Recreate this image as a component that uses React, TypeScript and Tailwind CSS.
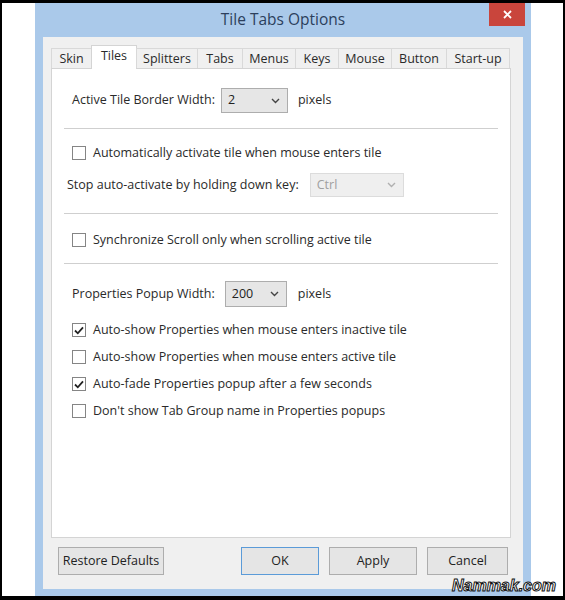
import { ReactNode } from "react";

const tabs = ["Skin", "Tiles", "Splitters", "Tabs", "Menus", "Keys", "Mouse", "Button", "Start-up"];
const tabWidths = [41, 45, 62, 46, 54, 44, 54, 56, 64];

const Chevron = ({ color = "#555" }: { color?: string }) => (
  <svg width="9" height="6" viewBox="0 0 9 6">
    <path d="M1 1 L4.5 4.5 L8 1" stroke={color} strokeWidth="1.4" fill="none" />
  </svg>
);

const Select = ({ value, width, disabled }: { value: string; width: string; disabled?: boolean }) => (
  <div
    className={`${width} h-full flex items-center justify-between pl-[6px] pr-[7px] border ${
      disabled ? "bg-[#efefef] border-[#dcdcdc] text-[#a0a0a0]" : "bg-[#e6e6e6] border-[#adadad] text-[#222]"
    }`}
  >
    <span>{value}</span>
    <Chevron color={disabled ? "#b0b0b0" : "#444"} />
  </div>
);

const Checkbox = ({ checked, children }: { checked?: boolean; children: ReactNode }) => (
  <div className="h-[16px] flex items-center pl-[20px]">
    <div className="w-[14px] h-[14px] bg-white border border-[#858585] flex items-center justify-center">
      {checked && (
        <svg width="10" height="9" viewBox="0 0 10 9">
          <path d="M1 4.5 L3.8 7.3 L9 1.3" stroke="#222" strokeWidth="1.8" fill="none" />
        </svg>
      )}
    </div>
    <span className="ml-[7px]">{children}</span>
  </div>
);

const Separator = ({ mt }: { mt: string }) => <div className={`${mt} mx-[12px] border-t border-[#cfcfcf]`} />;

const Button = ({ label, width, primary }: { label: string; width: string; primary?: boolean }) => (
  <div
    className={`${width} h-[28px] flex items-center justify-center bg-[#e5e5e5] border text-[12.5px] text-[#222] ${
      primary ? "border-[#5b9bd8]" : "border-[#adadad]"
    }`}
  >
    {label}
  </div>
);

export default function App() {
  return (
    <div
      className="w-[565px] h-[600px] bg-black pt-[3px] pb-[4px] px-[2px] relative"
      style={{ fontFamily: '"Open Sans", "Noto Sans", sans-serif' }}
    >
      <div className="w-full h-full bg-white pl-[33px]">
        <div className="w-[496px] h-full bg-[#aac9ea] flex flex-col px-[8px] pb-[7px]">
          <div className="h-[34px] relative flex items-center justify-center">
            <span className="text-[15.5px] text-[#2c3f5c]">Tile Tabs Options</span>
            <div className="absolute right-[-2px] top-0 w-[36px] h-[23px] bg-[#c9453c] flex items-center justify-center">
              <svg width="9" height="9" viewBox="0 0 9 9">
                <path d="M1 1 L8 8 M8 1 L1 8" stroke="white" strokeWidth="1.8" />
              </svg>
            </div>
          </div>
          <div className="flex-1 bg-[#f0f0f0] flex flex-col pt-[8px] pl-[8px] pr-[12px] text-[12.5px] text-[#2a2a2a]">
            <div className="flex items-end h-[23px] relative z-10 pl-px">
              {tabs.map((t, i) =>
                t === "Tiles" ? (
                  <div
                    key={t}
                    className="shrink-0 h-[24px] -mb-px -ml-px bg-white border border-b-0 border-[#d4d4d4] flex items-start justify-center pt-[1px]"
                    style={{ width: tabWidths[i] + 1 }}
                  >
                    {t}
                  </div>
                ) : (
                  <div
                    key={t}
                    className="shrink-0 h-[20px] bg-[#f0f0f0] border border-b-0 border-[#d9d9d9] -ml-px flex items-center justify-center pt-[1px]"
                    style={{ width: tabWidths[i] }}
                  >
                    {t}
                  </div>
                )
              )}
            </div>
            <div className="h-[470px] bg-white border border-[#d4d4d4] flex flex-col">
              <div className="mt-[19px] h-[25px] flex items-center pl-[20px]">
                <span>Active Tile Border Width:</span>
                <div className="ml-[6px] h-full">
                  <Select value="2" width="w-[67px]" />
                </div>
                <span className="ml-[10px]">pixels</span>
              </div>
              <Separator mt="mt-[15px]" />
              <div className="mt-[16px]">
                <Checkbox>Automatically activate tile when mouse enters tile</Checkbox>
              </div>
              <div className="mt-[12px] h-[24px] flex items-center pl-[15px]">
                <span>Stop auto-activate by holding down key:</span>
                <div className="ml-[11px] h-full">
                  <Select value="Ctrl" width="w-[94px]" disabled />
                </div>
              </div>
              <Separator mt="mt-[16px]" />
              <div className="mt-[18px]">
                <Checkbox>Synchronize Scroll only when scrolling active tile</Checkbox>
              </div>
              <Separator mt="mt-[15px]" />
              <div className="mt-[17px] h-[26px] flex items-center pl-[20px]">
                <span>Properties Popup Width:</span>
                <div className="ml-[10px] h-full">
                  <Select value="200" width="w-[62px]" />
                </div>
                <span className="ml-[11px]">pixels</span>
              </div>
              <div className="mt-[15px] flex flex-col gap-[11px]">
                <Checkbox checked>Auto-show Properties when mouse enters inactive tile</Checkbox>
                <Checkbox>Auto-show Properties when mouse enters active tile</Checkbox>
                <Checkbox checked>Auto-fade Properties popup after a few seconds</Checkbox>
                <Checkbox>Don't show Tab Group name in Properties popups</Checkbox>
              </div>
            </div>
            <div className="mt-[9px] flex items-center pl-[7px] pr-[3px]">
              <Button label="Restore Defaults" width="w-[106px]" />
              <div className="flex-1" />
              <Button label="OK" width="w-[78px]" primary />
              <div className="w-[10px]" />
              <Button label="Apply" width="w-[88px]" />
              <div className="w-[10px]" />
              <Button label="Cancel" width="w-[81px]" />
            </div>
          </div>
        </div>
      </div>
      <div className="absolute right-[9px] bottom-[6px] text-[16px] leading-none font-bold italic text-white [-webkit-text-stroke:1px_#111] [font-family:'Liberation_Sans',sans-serif]">
        Nammak.com
      </div>
    </div>
  );
}
